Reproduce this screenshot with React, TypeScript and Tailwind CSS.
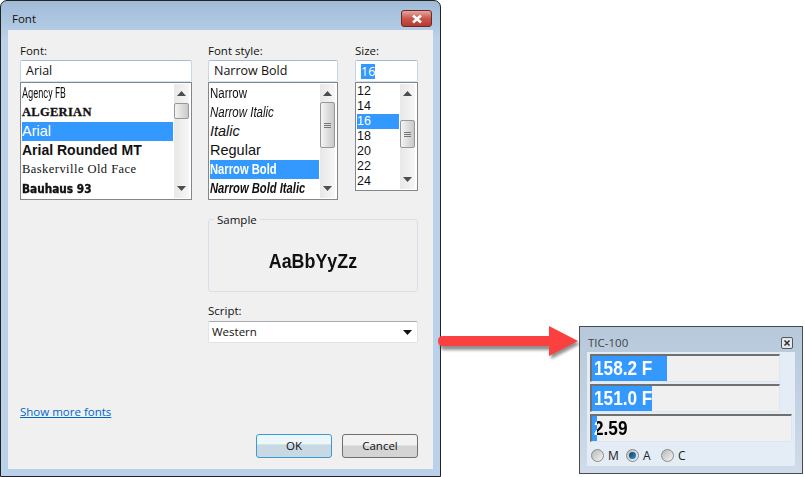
const ui = "font-['Open_Sans','Noto_Sans',sans-serif]";

function ScrollArrow({ down = false }: { down?: boolean }) {
  return (
    <svg width="9" height="5" viewBox="0 0 9 5" className="shrink-0">
      <path d={down ? 'M0 0H9L4.5 5Z' : 'M0 5H9L4.5 0Z'} fill="#4d4d4d" />
    </svg>
  );
}

function Scrollbar({ top, thumb, grip = true }: { top: number; thumb: number; grip?: boolean }) {
  return (
    <div className="relative ml-[1px] flex w-[15px] shrink-0 flex-col items-center justify-between bg-gradient-to-r from-[#e8e8e8] to-[#f6f6f6] py-[7px]">
      <ScrollArrow />
      <div
        className="absolute left-0 flex w-[15px] flex-col items-center justify-center gap-[1px] rounded-[2px] border border-[#979797] bg-gradient-to-r from-[#f4f4f4] to-[#c9c9c9]"
        style={{ top, height: thumb }}
      >
        {grip && (
          <>
            <div className="h-[1px] w-[7px] bg-[#777]" />
            <div className="h-[1px] w-[7px] bg-[#777]" />
            <div className="h-[1px] w-[7px] bg-[#777]" />
          </>
        )}
      </div>
      <ScrollArrow down />
    </div>
  );
}

function Field({ children }: { children: React.ReactNode }) {
  return (
    <div className="flex h-[22px] items-center rounded-[2px] border border-t-[#a3bcd6] border-r-[#c4d6e8] border-b-[#d5e3f0] border-l-[#c4d6e8] bg-white pl-[5px] text-[12.5px] leading-none text-[#111]">
      {children}
    </div>
  );
}

function FontColumn() {
  return (
    <div className="flex w-[172px] flex-col">
      <div className="mb-[1px] text-[11.5px] leading-[16px] text-[#111]">Font:</div>
      <Field>Arial</Field>
      <div className="flex h-[118px] border border-[#82878f] bg-white p-[1px] pr-[2px]">
        <div className="flex min-w-0 flex-1 flex-col whitespace-nowrap">
          <div className="flex h-[19px] items-center overflow-hidden font-['Roboto',sans-serif] text-[15px] text-[#111]">
            <span className="inline-block origin-left scale-x-[0.62]">Agency FB</span>
          </div>
          <div className="flex h-[19px] items-center font-['Liberation_Serif',serif] text-[12.5px] font-bold tracking-[0.3px] text-[#111] [-webkit-text-stroke:0.3px_#111]">
            ALGERIAN
          </div>
          <div className="flex h-[19px] items-center bg-[#3399ff] font-['Liberation_Sans',sans-serif] text-[14.5px] text-white">
            Arial
          </div>
          <div className="flex h-[19px] items-center font-['Liberation_Sans',sans-serif] text-[14px] font-bold text-[#111]">
            Arial Rounded MT
          </div>
          <div className="flex h-[19px] items-center font-['Liberation_Serif',serif] text-[12.5px] tracking-[0.45px] text-[#111]">
            Baskerville Old Face
          </div>
          <div className="flex h-[19px] items-center overflow-hidden font-['DejaVu_Sans',sans-serif] text-[12px] font-bold text-[#111] [-webkit-text-stroke:0.4px_#111]">
            <span className="inline-block origin-left scale-x-[0.88]">Bauhaus 93</span>
          </div>
        </div>
        <Scrollbar top={19} thumb={16} grip={false} />
      </div>
    </div>
  );
}

function StyleColumn() {
  return (
    <div className="flex w-[130px] flex-col">
      <div className="mb-[1px] text-[11.5px] leading-[16px] text-[#111]">Font style:</div>
      <Field>Narrow Bold</Field>
      <div className="flex h-[118px] border border-[#82878f] bg-white p-[1px] pr-[2px]">
        <div className="flex min-w-0 flex-1 flex-col whitespace-nowrap font-['Liberation_Sans',sans-serif] text-[#111]">
          <div className="flex h-[19px] items-center overflow-hidden text-[14px]">
            <span className="inline-block origin-left scale-x-[0.82]">Narrow</span>
          </div>
          <div className="flex h-[19px] items-center overflow-hidden text-[14px] italic">
            <span className="inline-block origin-left scale-x-[0.82]">Narrow Italic</span>
          </div>
          <div className="flex h-[19px] items-center text-[14.5px] italic">Italic</div>
          <div className="flex h-[19px] items-center text-[14.5px]">Regular</div>
          <div className="flex h-[19px] items-center overflow-hidden bg-[#3399ff] text-[14px] font-bold text-white">
            <span className="inline-block origin-left scale-x-[0.8]">Narrow Bold</span>
          </div>
          <div className="flex h-[19px] items-center overflow-hidden text-[14px] font-bold italic">
            <span className="inline-block origin-left scale-x-[0.8]">Narrow Bold Italic</span>
          </div>
        </div>
        <Scrollbar top={18} thumb={46} />
      </div>
    </div>
  );
}

function SizeColumn() {
  const sizes = ['12', '14', '16', '18', '20', '22', '24'];
  return (
    <div className="flex w-[63px] flex-col">
      <div className="mb-[1px] text-[11.5px] leading-[16px] text-[#111]">Size:</div>
      <Field>
        <span className="bg-[#3399ff] leading-[15px] text-white">16</span>
      </Field>
      <div className="flex h-[109px] border border-[#82878f] bg-white p-[1px] pr-[2px]">
        <div className="flex min-w-0 flex-1 flex-col font-['Liberation_Sans',sans-serif]">
          {sizes.map((size) => (
            <div
              key={size}
              className={
                size === '16'
                  ? 'flex h-[15px] items-center bg-[#3399ff] text-[12.5px] leading-none text-white'
                  : 'flex h-[15px] items-center text-[12.5px] leading-none text-[#111]'
              }
            >
              {size}
            </div>
          ))}
        </div>
        <Scrollbar top={36} thumb={28} />
      </div>
    </div>
  );
}

function FontDialog() {
  return (
    <div className={`${ui} flex h-[477px] w-[441px] shrink-0 flex-col rounded-t-[7px] border border-[#222] bg-gradient-to-b from-[#a1bbd7] from-0% to-[#b9d1ea] to-[8%] px-[7px] pb-[7px]`}>
      <div className="flex h-[29px] shrink-0 items-start justify-between">
        <div className="pl-[4px] pt-[10px] text-[11.5px] leading-[16px] text-[#111]">Font</div>
        <div className="mr-[1px] mt-[9px] flex h-[17px] w-[31px] items-center justify-center rounded-[3px] border border-[#6b2a2a] bg-gradient-to-b from-[#e4a79e] via-[#c9574a] to-[#b8392e]">
          <svg width="12" height="10" viewBox="0 0 12 10">
            <path d="M2 1.5L10 8.5M10 1.5L2 8.5" stroke="#fff" strokeWidth="2.6" />
          </svg>
        </div>
      </div>

      <div className="flex flex-1 flex-col bg-[#f0f0f0] pl-[12px] pr-[15px] pt-[13px]">
        <div className="flex items-start">
          <FontColumn />
          <div className="w-[16px]" />
          <StyleColumn />
          <div className="w-[17px]" />
          <SizeColumn />
        </div>

        <div className="ml-[188px] mt-[19px] flex w-[210px] flex-col">
          <div className="relative flex h-[73px] items-center justify-center rounded-[3px] border border-[#d8dfe8] pt-[10px]">
            <span className="absolute -top-[8px] left-[5px] bg-[#f0f0f0] px-[3px] text-[11.5px] leading-[16px] text-[#111]">
              Sample
            </span>
            <span className="inline-block origin-center scale-x-[0.85] whitespace-nowrap font-['Liberation_Sans',sans-serif] text-[21px] font-bold text-[#111]">
              AaBbYyZz
            </span>
          </div>
          <div className="mb-[2px] mt-[11px] text-[11.5px] leading-[16px] text-[#111]">Script:</div>
          <div className="flex h-[22px] items-center justify-between rounded-[2px] border border-[#dde3ea] border-t-[#aaabb4] bg-white pl-[3px] pr-[5px] text-[11.5px] text-[#111]">
            Western
            <svg width="9" height="5" viewBox="0 0 9 5">
              <path d="M0 0H9L4.5 5Z" fill="#111" />
            </svg>
          </div>
        </div>

        <div className="mt-[61px] text-[11.5px] leading-[16px] text-[#0066cc] underline">Show more fonts</div>

        <div className="mt-[14px] flex justify-end gap-[10px] text-[11.5px] text-[#111]">
          <div className="flex h-[24px] w-[76px] items-center justify-center rounded-[3px] border border-[#3c9ad0] bg-gradient-to-b from-[#ecf7fc] from-40% to-[#c9d9e3] to-45%">
            OK
          </div>
          <div className="flex h-[24px] w-[76px] items-center justify-center rounded-[3px] border border-[#707070] bg-gradient-to-b from-[#f2f2f2] from-45% to-[#d4d4d4] to-50%">
            Cancel
          </div>
        </div>
      </div>
    </div>
  );
}

function Meter({ value, fill, wide = false }: { value: string; fill: number; wide?: boolean }) {
  const label = "whitespace-nowrap pl-[2px] font-['Liberation_Sans',sans-serif] text-[20px] font-bold leading-[25px]";
  const number = 'inline-block origin-left scale-x-[0.86]';
  return (
    <div
      className={
        wide
          ? 'relative h-[28px] w-[202px] border border-[#dfe5ec] border-t-2 border-l-2 border-t-[#707070] border-l-[#707070] bg-[#f0f0f0]'
          : 'relative h-[28px] w-[190px] border border-[#dfe5ec] border-t-2 border-l-2 border-t-[#707070] border-l-[#707070] bg-[#f0f0f0]'
      }
    >
      <div className={`${label} text-black`}>
        <span className={number}>{value}</span>
      </div>
      <div className="absolute inset-y-0 left-0 overflow-hidden bg-[#3399ff]" style={{ width: fill }}>
        <div className={`${label} text-white`}>
          <span className={number}>{value}</span>
        </div>
      </div>
    </div>
  );
}

function Radio({ label, checked = false }: { label: string; checked?: boolean }) {
  return (
    <div className="flex items-center gap-[4px]">
      <div className="flex h-[13px] w-[13px] items-center justify-center rounded-full border border-[#8a8a8a] bg-gradient-to-br from-[#b8b8b8] to-[#f6f6f6]">
        {checked && <div className="h-[7px] w-[7px] rounded-full bg-gradient-to-br from-[#0a3d66] to-[#2c9ad6]" />}
      </div>
      <span className="w-[14px] text-[12px] leading-none text-[#222]">{label}</span>
    </div>
  );
}

function TicPanel() {
  return (
    <div className={`${ui} flex h-[148px] w-[224px] flex-col border border-[#4a4a4a] bg-gradient-to-b from-[#b6c8da] to-[#cfdcea] px-[7px] pb-[7px]`}>
      <div className="flex h-[25px] shrink-0 items-center justify-between pl-[1px] pr-[2px] pt-[6px] text-[11.5px] text-[#444]">
        TIC-100
        <div className="flex h-[12px] w-[12px] items-center justify-center rounded-[2px] border border-[#555] bg-[#e2e8ef]">
          <svg width="8" height="8" viewBox="0 0 8 8">
            <path d="M1.5 1.5L6.5 6.5M6.5 1.5L1.5 6.5" stroke="#333" strokeWidth="1.6" />
          </svg>
        </div>
      </div>
      <div className="flex flex-1 flex-col gap-[2px] bg-[#e4ecf6] pl-[3px] pt-[2px]">
        <Meter value="158.2 F" fill={75} />
        <Meter value="151.0 F" fill={60} />
        <Meter value="2.59" fill={5} wide />
        <div className="ml-[1px] mt-[5px] flex gap-[4px]">
          <Radio label="M" />
          <Radio label="A" checked />
          <Radio label="C" />
        </div>
      </div>
    </div>
  );
}

export default function App() {
  return (
    <div className="relative flex h-[477px] w-[805px] items-end overflow-hidden bg-white">
      <FontDialog />
      <div className="mb-[3px] ml-[138px]">
        <TicPanel />
      </div>
      <svg width="150" height="46" viewBox="0 0 150 46" className="absolute left-[434px] top-[322px]">
        <defs>
          <filter id="arrowShadow" x="-5%" y="-20%" width="110%" height="150%">
            <feGaussianBlur stdDeviation="1.5" />
          </filter>
        </defs>
        <path
          d="M9 15H115V5L144 19L115 34V25H9Q4 25 4 20Q4 15 9 15Z"
          fill="#555"
          opacity="0.65"
          filter="url(#arrowShadow)"
          transform="translate(2 3)"
        />
        <path d="M9 14H115V4L144 19L115 34V24H9Q4 24 4 19Q4 14 9 14Z" fill="#fb4040" />
      </svg>
    </div>
  );
}
